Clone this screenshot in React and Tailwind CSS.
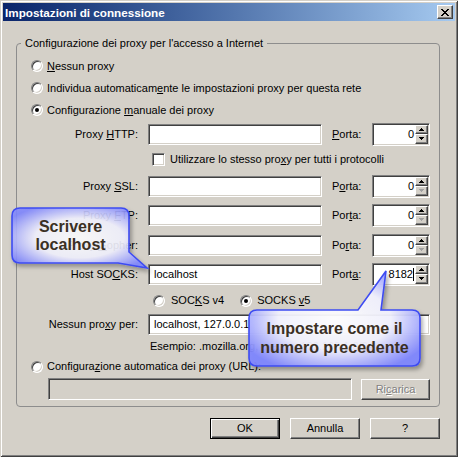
import React from 'react'

const sunken =
  'border border-[#808080] border-r-white border-b-white shadow-[inset_1px_1px_0_#404040,inset_-1px_-1px_0_#d4d0c8]'
const raised =
  'border border-white border-r-[#404040] border-b-[#404040] shadow-[inset_-1px_-1px_0_#808080]'

function U({ children }) {
  return <span className="underline underline-offset-[1px] decoration-[1px]">{children}</span>
}

function Radio({ checked }) {
  return (
    <span className={`relative flex items-center justify-center w-[12px] h-[12px] shrink-0 rounded-full bg-white border border-[#808080] border-r-white border-b-white shadow-[inset_1px_1px_0_#404040,inset_-1px_-1px_0_#d4d0c8]`}>
      {checked && <span className="w-[4px] h-[4px] rounded-full bg-black" />}
    </span>
  )
}

function Arrow({ down, off }) {
  return (
    <div className={`flex-1 flex items-center justify-center bg-[#d4d0c8] ${raised}`}>
      <svg width="5" height="3" viewBox="0 0 5 3" shapeRendering="crispEdges">
        <path
          d={down ? 'M0 0h5v1H4v1H3v1H2V2H1V1H0z' : 'M2 0h1v1h1v1h1v1H0V2h1V1h1z'}
          fill={off ? '#a0a0a0' : '#000'}
        />
      </svg>
    </div>
  )
}

function Spin({ value, downOff, caret }) {
  return (
    <div className={`flex h-[23px] w-[58px] bg-white p-[1px] ${sunken}`}>
      <span className="flex-1 flex items-center justify-end pr-[1px]">
        {value}
        {caret && <span className="w-[1px] h-[13px] bg-black" />}
      </span>
      <div className="flex flex-col w-[13px]">
        <Arrow />
        <Arrow down off={downOff} />
      </div>
    </div>
  )
}

function ProxyRow({ label, porta, value = '', port = '0', downOff, caret, h }) {
  return (
    <div className={`flex items-center ${h}`}>
      <span className="w-[121px] text-right">{label}</span>
      <div className={`ml-[10px] w-[174px] h-[21px] bg-white flex items-center pl-[5px] ${sunken}`}>{value}</div>
      <span className="ml-[10px] w-[40px]">{porta}</span>
      <Spin value={port} downOff={downOff} caret={caret} />
    </div>
  )
}

function Button({ children, def, disabled, w = 'w-[70px]' }) {
  return (
    <div
      className={`h-[21px] ${w} flex items-center justify-center bg-[#d4d0c8] ${
        def
          ? 'border border-black shadow-[inset_1px_1px_0_#fff,inset_-1px_-1px_0_#404040,inset_-2px_-2px_0_#808080]'
          : raised
      } ${disabled ? 'text-[#808080] [text-shadow:1px_1px_0_#fff]' : ''}`}
    >
      {children}
    </div>
  )
}

export default function App() {
  return (
    <div className="relative w-[458px] h-[457px] overflow-hidden bg-[#d4d0c8] text-[11px] leading-[13px] text-black font-['Liberation_Sans',Arial,sans-serif] shadow-[inset_1px_1px_0_#d4d0c8,inset_-1px_-1px_0_#404040,inset_2px_2px_0_#fff,inset_-2px_-2px_0_#808080]">
      {/* Title bar */}
      <div className="mx-[3px] mt-[3px] h-[18px] flex items-center justify-between pl-[2px] pr-[2px] bg-linear-to-r from-[#0a246a] to-[#a6caf0]">
        <span className="text-white font-bold text-[11.7px]">Impostazioni di connessione</span>
        <div className={`w-[16px] h-[14px] flex items-center justify-center bg-[#d4d0c8] ${raised}`}>
          <svg width="8" height="7" viewBox="0 0 8 7" shapeRendering="crispEdges">
            <path d="M0 0h2v1h1v1h2V1h1V0h2v1H7v1H6v1H5v1h1v1h1v1h1v1H6V6H5V5H3v1H2v1H0V6h1V5h1V4h1V3H2V2H1V1H0z" fill="#000" />
          </svg>
        </div>
      </div>

      {/* Group box */}
      <fieldset className="ml-[16px] mt-[15px] w-[424px] border border-[#8d8d8d] rounded-[4px] pt-[5px] pb-[5px]">
        <legend className="ml-[4px] px-[4px] leading-[14px]">Configurazione dei proxy per l'accesso a Internet</legend>

        <div className="flex items-center h-[22px] pl-[14px] gap-[4px]">
          <Radio />
          <span><U>N</U>essun proxy</span>
        </div>
        <div className="flex items-center h-[22px] pl-[14px] gap-[4px]">
          <Radio />
          <span>Individua automaticam<U>e</U>nte le impostazioni proxy per questa rete</span>
        </div>
        <div className="flex items-center h-[22px] pl-[14px] gap-[4px]">
          <Radio checked />
          <span>Configurazione <U>m</U>anuale dei proxy</span>
        </div>

        <ProxyRow h="h-[26px]" label={<>Proxy <U>H</U>TTP:</>} porta={<><U>P</U>orta:</>} />
        <div className="flex items-center h-[25px] pl-[135px] gap-[5px]">
          <span className={`w-[13px] h-[13px] bg-white ${sunken}`} />
          <span>Utilizzare lo stesso pro<U>x</U>y per tutti i protocolli</span>
        </div>
        <ProxyRow h="h-[28px]" label={<>Proxy <U>S</U>SL:</>} porta={<>P<U>o</U>rta:</>} downOff />
        <ProxyRow h="h-[30px]" label={<>Proxy <U>F</U>TP:</>} porta={<>Por<U>t</U>a:</>} downOff />
        <ProxyRow h="h-[30px]" label={<>Proxy <U>G</U>opher:</>} porta={<>Po<U>r</U>ta:</>} downOff />
        <ProxyRow h="h-[28px]" label={<>Host SO<U>C</U>KS:</>} porta={<>Port<U>a</U>:</>} value="localhost" port="8182" caret />

        <div className="flex items-center h-[25px] pl-[136px]">
          <Radio />
          <span className="ml-[6px]">SOC<U>K</U>S v4</span>
          <span className="ml-[16px]"><Radio checked /></span>
          <span className="ml-[5px]">SOCKS <U>v</U>5</span>
        </div>
        <div className="flex items-center h-[23px]">
          <span className="w-[121px] text-right">Nessun pro<U>x</U>y per:</span>
          <div className={`ml-[10px] w-[282px] h-[21px] bg-white flex items-center pl-[5px] ${sunken}`}>localhost, 127.0.0.1</div>
        </div>
        <div className="flex items-center h-[20px] pl-[133px]">
          Esempio: .mozilla.org, .net.nz, 192.168.1.0/24
        </div>
        <div className="flex items-center h-[21px] pl-[14px] gap-[4px]">
          <Radio />
          <span>Configura<U>z</U>ione automatica dei proxy (URL):</span>
        </div>
        <div className="flex items-center h-[24px] pl-[31px]">
          <div className={`w-[304px] h-[22px] bg-[#d4d0c8] ${sunken}`} />
          <div className="ml-[9px]">
            <Button disabled w="w-[69px]">Ri<U>c</U>arica</Button>
          </div>
        </div>
      </fieldset>

      {/* Dialog buttons */}
      <div className="flex justify-end gap-[10px] mt-[11px] mr-[18px]">
        <Button def>OK</Button>
        <Button>Annulla</Button>
        <Button>?</Button>
      </div>

      {/* Callout bubbles */}
      <svg className="absolute inset-0 pointer-events-none" width="458" height="457" viewBox="0 0 458 457">
        <defs>
          <radialGradient id="bub" cx="50%" cy="50%" r="60%">
            <stop offset="0%" stopColor="#ffffff" />
            <stop offset="55%" stopColor="#f2f2ff" />
            <stop offset="100%" stopColor="#7f86ff" />
          </radialGradient>
          <filter id="sh" x="-10%" y="-10%" width="130%" height="140%">
            <feDropShadow dx="2" dy="3" stdDeviation="2" floodColor="#000" floodOpacity="0.35" />
          </filter>
        </defs>
        <path
          d="M20 208H121Q129 208 129 216V252L147 268L118 263H20Q12 263 12 255V216Q12 208 20 208Z"
          fill="url(#bub)"
          fillOpacity="0.88"
          stroke="#3e4cf2"
          strokeWidth="1.6"
          filter="url(#sh)"
        />
        <path
          d="M257 310H358L386 271L381 310H412Q420 310 420 318V358Q420 366 412 366H257Q249 366 249 358V318Q249 310 257 310Z"
          fill="url(#bub)"
          fillOpacity="0.93"
          stroke="#3e4cf2"
          strokeWidth="1.6"
          filter="url(#sh)"
        />
      </svg>
      <div className="absolute left-[12px] top-[208px] w-[117px] h-[55px] flex items-center justify-center text-center font-bold text-[16px] leading-[18px] text-[#3b3024] font-['Liberation_Sans',Arial,sans-serif]">
        Scrivere<br />localhost
      </div>
      <div className="absolute left-[249px] top-[310px] w-[171px] h-[56px] flex items-center justify-center text-center font-bold text-[16px] leading-[19px] text-[#3b3024] font-['Liberation_Sans',Arial,sans-serif]">
        Impostare come il<br />numero precedente
      </div>
    </div>
  )
}
